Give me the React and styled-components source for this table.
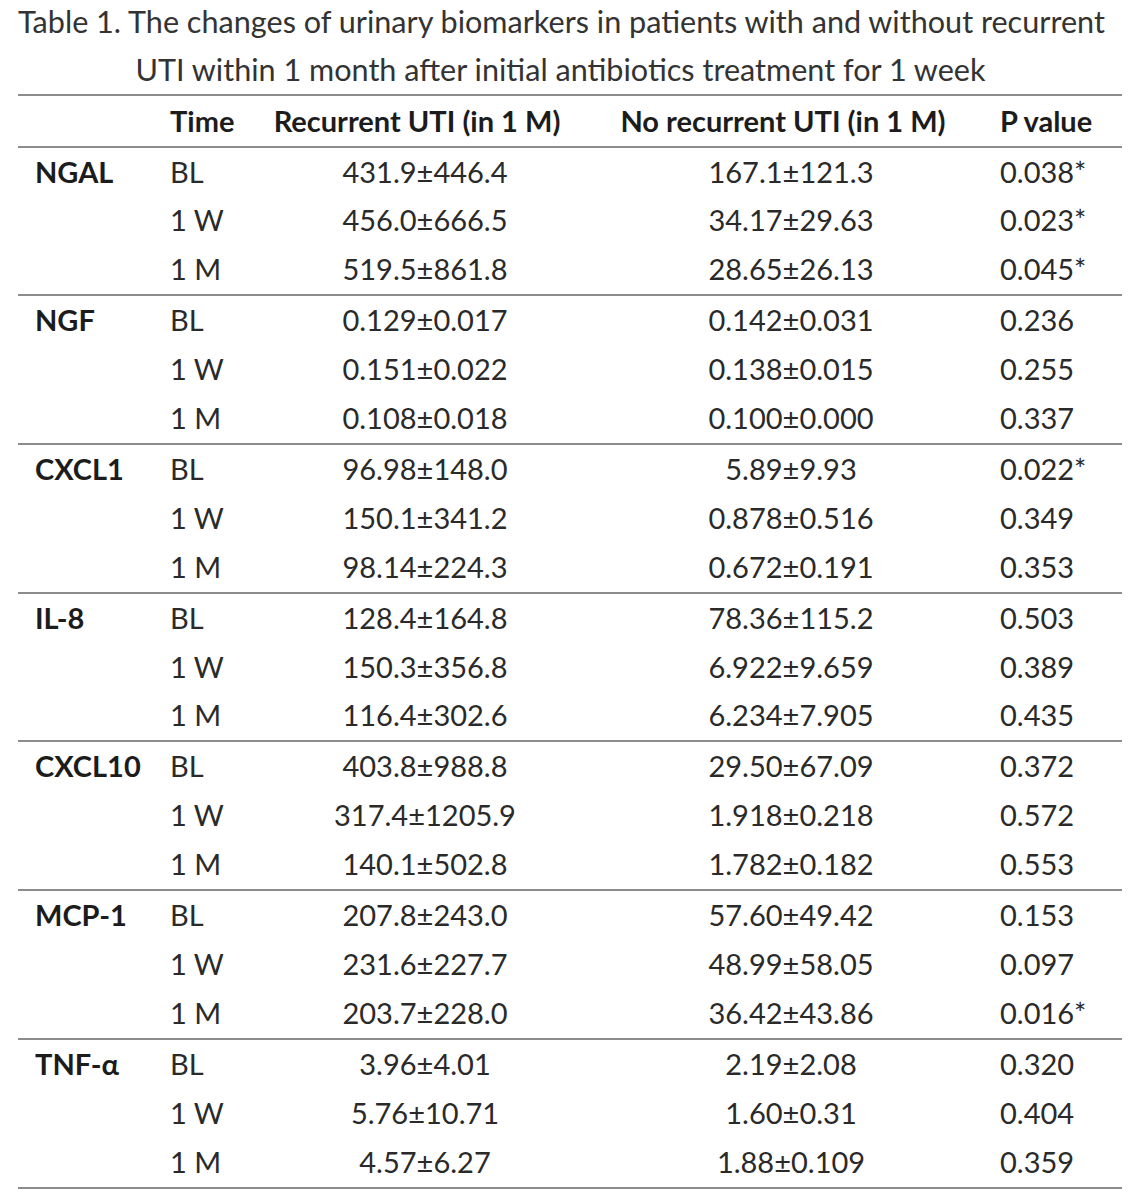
import React from "react";
import styled, { createGlobalStyle } from "styled-components";

const Global = createGlobalStyle`
  html, body { margin: 0; padding: 0; background: #ffffff; }
  body { font-family: Lato, "Open Sans", "Liberation Sans", sans-serif; color: #262626; }
`;

const Page = styled.div`
  width: 1141px;
  padding: 0;
`;

const Caption = styled.div`
  margin: -2px 38px 0 18px;
  text-align: center;
  font-size: 30.6px;
  line-height: 48px;
  color: #333;
`;

const CaptionLine = styled.span`
  display: block;
  white-space: nowrap;
`;

const Table = styled.div`
  margin: 0 19px 0 18px;
  border-top: 2px solid #8c8c8c;
  border-bottom: 2px solid #8c8c8c;
  font-size: 29px;
`;

const cols = "142px 100px 330px 402px 130px";

const HeaderRow = styled.div`
  display: grid;
  grid-template-columns: ${cols};
  height: 49.5px;
  line-height: 49.5px;
`;

const Group = styled.div`
  border-top: 2px solid #8c8c8c;
`;

const Row = styled.div`
  display: grid;
  grid-template-columns: ${cols};
  height: 48.92px;
  line-height: 48.92px;
`;

const Cell = styled.div`
  white-space: nowrap;
  text-align: ${(p) => p.$align || "left"};
  padding-left: ${(p) => p.$pl || 0}px;
  padding-right: ${(p) => p.$pr || 0}px;
  font-weight: ${(p) => (p.$bold ? 700 : 400)};
  color: ${(p) => (p.$bold ? "#1c1c1c" : "#2a2a2a")};
`;

const data = [
  ["NGAL", [
    ["BL", "431.9±446.4", "167.1±121.3", "0.038*"],
    ["1 W", "456.0±666.5", "34.17±29.63", "0.023*"],
    ["1 M", "519.5±861.8", "28.65±26.13", "0.045*"],
  ]],
  ["NGF", [
    ["BL", "0.129±0.017", "0.142±0.031", "0.236"],
    ["1 W", "0.151±0.022", "0.138±0.015", "0.255"],
    ["1 M", "0.108±0.018", "0.100±0.000", "0.337"],
  ]],
  ["CXCL1", [
    ["BL", "96.98±148.0", "5.89±9.93", "0.022*"],
    ["1 W", "150.1±341.2", "0.878±0.516", "0.349"],
    ["1 M", "98.14±224.3", "0.672±0.191", "0.353"],
  ]],
  ["IL-8", [
    ["BL", "128.4±164.8", "78.36±115.2", "0.503"],
    ["1 W", "150.3±356.8", "6.922±9.659", "0.389"],
    ["1 M", "116.4±302.6", "6.234±7.905", "0.435"],
  ]],
  ["CXCL10", [
    ["BL", "403.8±988.8", "29.50±67.09", "0.372"],
    ["1 W", "317.4±1205.9", "1.918±0.218", "0.572"],
    ["1 M", "140.1±502.8", "1.782±0.182", "0.553"],
  ]],
  ["MCP-1", [
    ["BL", "207.8±243.0", "57.60±49.42", "0.153"],
    ["1 W", "231.6±227.7", "48.99±58.05", "0.097"],
    ["1 M", "203.7±228.0", "36.42±43.86", "0.016*"],
  ]],
  ["TNF-α", [
    ["BL", "3.96±4.01", "2.19±2.08", "0.320"],
    ["1 W", "5.76±10.71", "1.60±0.31", "0.404"],
    ["1 M", "4.57±6.27", "1.88±0.109", "0.359"],
  ]],
];

export default function App() {
  return (
    <Page>
      <Global />
      <Caption>
        <CaptionLine>Table 1. The changes of urinary biomarkers in patients with and without recurrent</CaptionLine>
        <CaptionLine>UTI within 1 month after initial antibiotics treatment for 1 week</CaptionLine>
      </Caption>
      <Table>
        <HeaderRow>
          <Cell $bold />
          <Cell $bold $pl={10}>Time</Cell>
          <Cell $bold $align="center" $pr={16}>Recurrent UTI (in 1 M)</Cell>
          <Cell $bold $align="center" $pr={16}>No recurrent UTI (in 1 M)</Cell>
          <Cell $bold $pl={8}>P value</Cell>
        </HeaderRow>
        {data.map(([marker, rows]) => (
          <Group key={marker}>
            {rows.map((r, ri) => (
              <Row key={r[0]}>
                <Cell $bold $pl={17}>{ri === 0 ? marker : ""}</Cell>
                <Cell $pl={10}>{r[0]}</Cell>
                <Cell $align="center">{r[1]}</Cell>
                <Cell $align="center">{r[2]}</Cell>
                <Cell $pl={8}>{r[3]}</Cell>
              </Row>
            ))}
          </Group>
        ))}
      </Table>
    </Page>
  );
}
